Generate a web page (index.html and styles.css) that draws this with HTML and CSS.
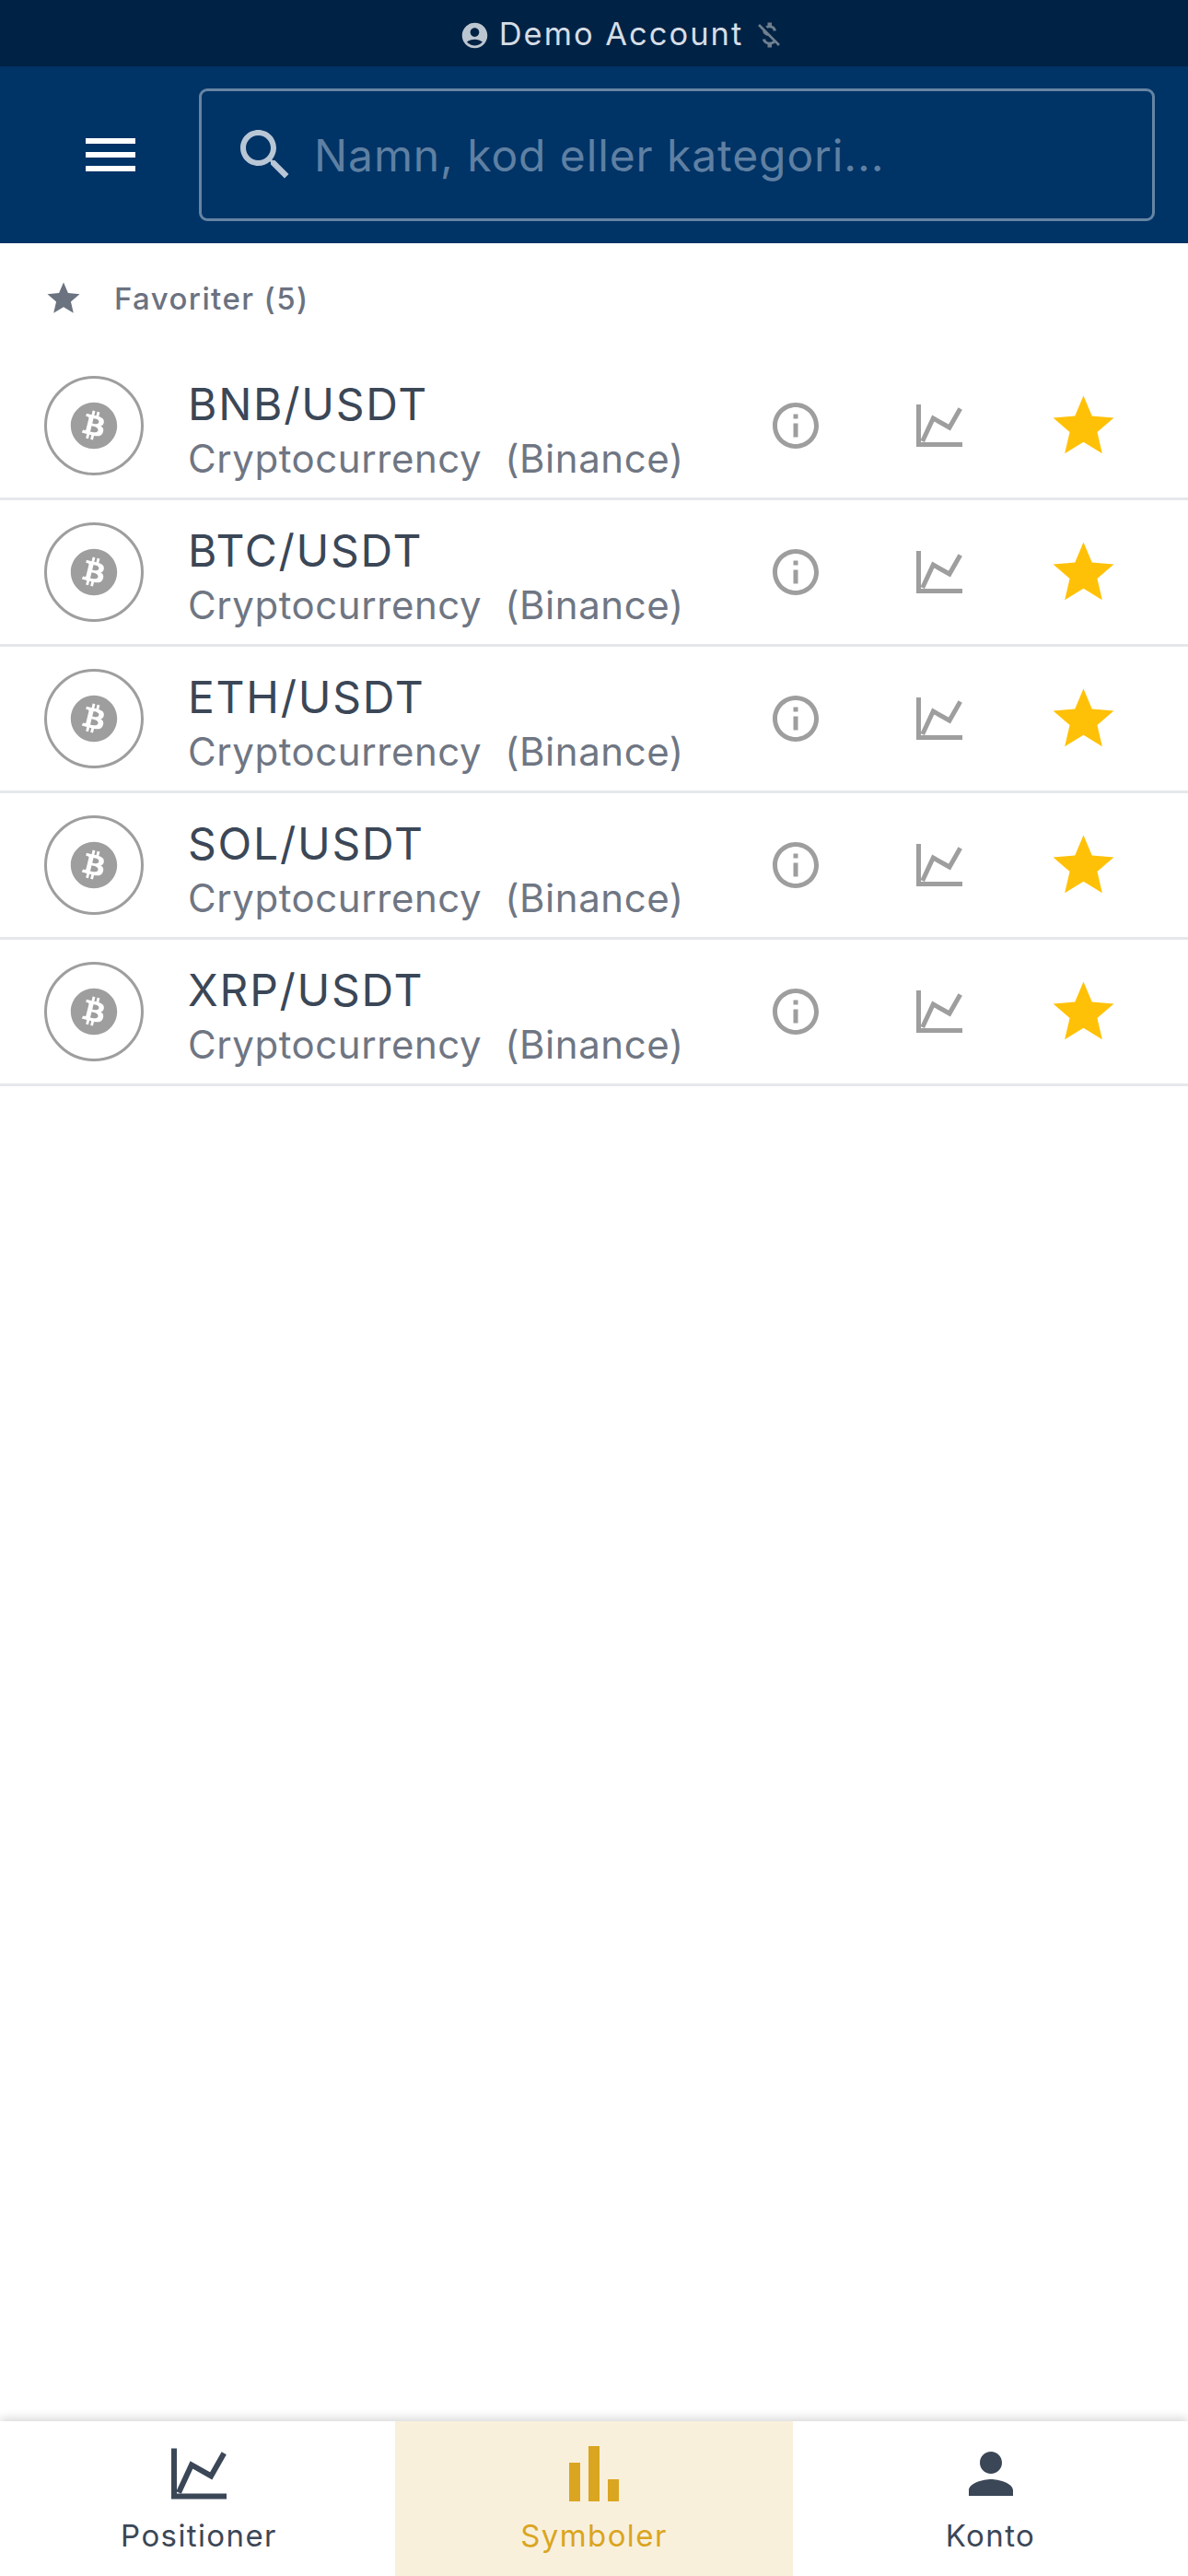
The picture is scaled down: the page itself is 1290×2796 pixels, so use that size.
FILE: index.html
```html
<!DOCTYPE html>
<html lang="en">
<head>
  <meta charset="UTF-8" />
  <title>Symboler</title>
  <link rel="stylesheet" href="styles.css">
</head>
<body>
  <!-- Shared icons -->
  <svg class="sprite" aria-hidden="true">
    <symbol id="i-btc" viewBox="0 0 512 512"><path d="M504 256c0 136.967-111.033 248-248 248S8 392.967 8 256 119.033 8 256 8s248 111.033 248 248zm-141.651-35.33c4.937-32.999-20.191-50.739-54.55-62.573l11.146-44.702-27.213-6.781-10.851 43.524c-7.154-1.783-14.502-3.464-21.803-5.13l10.929-43.81-27.198-6.781-11.153 44.686c-5.922-1.349-11.735-2.682-17.377-4.084l.031-.14-37.53-9.37-7.239 29.062s20.191 4.627 19.765 4.913c11.022 2.751 13.014 10.044 12.68 15.825l-12.696 50.925c.76.194 1.744.473 2.829.907-.907-.225-1.876-.473-2.876-.713l-17.796 71.338c-1.349 3.348-4.767 8.37-12.471 6.464.271.395-19.78-4.937-19.78-4.937l-13.51 31.147 35.414 8.827c6.588 1.651 13.045 3.379 19.4 5.006l-11.262 45.213 27.182 6.781 11.153-44.733a1038.209 1038.209 0 0 0 21.69 5.627l-11.115 44.523 27.213 6.781 11.262-45.128c46.404 8.781 81.299 5.239 95.986-36.727 11.836-33.79-.589-53.281-25.004-65.991 17.78-4.098 31.174-15.792 34.747-39.949zm-62.177 87.179c-8.41 33.79-65.308 15.523-83.755 10.943l14.944-59.899c18.446 4.603 77.6 13.717 68.811 48.956zm8.417-87.667c-7.673 30.736-55.031 15.12-70.393 11.292l13.548-54.327c15.363 3.828 64.836 10.973 56.845 43.035z"/></symbol>
    <symbol id="i-info" viewBox="0 0 24 24"><path d="M11 7h2v2h-2zm0 4h2v6h-2zm1-9C6.48 2 2 6.48 2 12s4.48 10 10 10 10-4.48 10-10S17.52 2 12 2zm0 18c-4.41 0-8-3.59-8-8s3.59-8 8-8 8 3.59 8 8-3.59 8-8 8z"/></symbol>
    <symbol id="i-chart" viewBox="0 0 50 46"><path d="M0 0h5v41h45v5H0z"/><path d="M6.7 40 18.3 15 36 25 47.7 4.5" fill="none" stroke="currentColor" stroke-width="5"/></symbol>
    <symbol id="i-star" viewBox="0 0 24 24"><path d="M12 17.27L18.18 21l-1.64-7.03L22 9.24l-7.19-.61L12 2 9.19 8.63 2 9.24l5.46 4.73L5.82 21z"/></symbol>
  </svg>

  <div class="status-bar">
    <svg class="status-user" viewBox="0 0 24 24"><path d="M12 2C6.48 2 2 6.48 2 12s4.48 10 10 10 10-4.48 10-10S17.52 2 12 2zm0 4c1.93 0 3.5 1.57 3.5 3.5S13.93 13 12 13s-3.5-1.57-3.5-3.5S10.07 6 12 6zm0 14c-2.03 0-4.43-.82-6.14-2.88C7.55 15.8 9.68 15 12 15s4.45.8 6.14 2.12C16.43 19.18 14.03 20 12 20z"/></svg>
    <span class="status-text">Demo Account</span>
    <svg class="status-money" viewBox="0 0 24 24"><path d="M12.5 6.9c1.78 0 2.44.85 2.5 2.1h2.21c-.07-1.72-1.12-3.3-3.21-3.81V3h-3v2.16c-.53.12-1.03.3-1.48.54l1.47 1.47c.41-.17.91-.27 1.51-.27zM5.33 4.06L4.06 5.33 7.5 8.77c0 2.08 1.56 3.21 3.91 3.91l3.51 3.51c-.34.48-1.05.91-2.42.91-2.06 0-2.87-.92-2.98-2.1h-2.2c.12 2.19 1.76 3.42 3.68 3.83V21h3v-2.15c.96-.18 1.82-.55 2.45-1.12l2.22 2.22 1.27-1.27L5.33 4.06z"/></svg>
  </div>

  <header class="top-bar">
    <svg class="menu-icon" viewBox="0 0 24 24"><path d="M3 18h18v-2H3v2zm0-5h18v-2H3v2zm0-7v2h18V6H3z"/></svg>
    <div class="search-box">
      <svg class="search-icon" viewBox="0 0 24 24"><path d="M15.5 14h-.79l-.28-.27C15.41 12.59 16 11.11 16 9.5 16 5.91 13.09 3 9.5 3S3 5.91 3 9.5 5.91 16 9.5 16c1.61 0 3.09-.59 4.23-1.57l.27.28v.79l5 4.99L20.49 19l-4.99-5zm-6 0C7.01 14 5 11.99 5 9.5S7.01 5 9.5 5 14 7.01 14 9.5 11.99 14 9.5 14z"/></svg>
      <span class="search-hint">Namn, kod eller kategori...</span>
    </div>
  </header>

  <main class="content">
    <div class="section-title">
      <svg class="section-star"><use href="#i-star"/></svg>
      <span>Favoriter (5)</span>
    </div>

    <ul class="symbols">
      <li class="symbol">
        <span class="coin"><svg><use href="#i-btc"/></svg></span>
        <div class="symbol-text">
          <div class="symbol-name">BNB/USDT</div>
          <div class="symbol-sub"><span>Cryptocurrency</span><span>(Binance)</span></div>
        </div>
        <span class="action"><svg class="ic-info"><use href="#i-info"/></svg></span>
        <span class="action"><svg class="ic-chart"><use href="#i-chart"/></svg></span>
        <span class="action"><svg class="ic-star"><use href="#i-star"/></svg></span>
      </li>
      <li class="symbol">
        <span class="coin"><svg><use href="#i-btc"/></svg></span>
        <div class="symbol-text">
          <div class="symbol-name">BTC/USDT</div>
          <div class="symbol-sub"><span>Cryptocurrency</span><span>(Binance)</span></div>
        </div>
        <span class="action"><svg class="ic-info"><use href="#i-info"/></svg></span>
        <span class="action"><svg class="ic-chart"><use href="#i-chart"/></svg></span>
        <span class="action"><svg class="ic-star"><use href="#i-star"/></svg></span>
      </li>
      <li class="symbol">
        <span class="coin"><svg><use href="#i-btc"/></svg></span>
        <div class="symbol-text">
          <div class="symbol-name">ETH/USDT</div>
          <div class="symbol-sub"><span>Cryptocurrency</span><span>(Binance)</span></div>
        </div>
        <span class="action"><svg class="ic-info"><use href="#i-info"/></svg></span>
        <span class="action"><svg class="ic-chart"><use href="#i-chart"/></svg></span>
        <span class="action"><svg class="ic-star"><use href="#i-star"/></svg></span>
      </li>
      <li class="symbol">
        <span class="coin"><svg><use href="#i-btc"/></svg></span>
        <div class="symbol-text">
          <div class="symbol-name">SOL/USDT</div>
          <div class="symbol-sub"><span>Cryptocurrency</span><span>(Binance)</span></div>
        </div>
        <span class="action"><svg class="ic-info"><use href="#i-info"/></svg></span>
        <span class="action"><svg class="ic-chart"><use href="#i-chart"/></svg></span>
        <span class="action"><svg class="ic-star"><use href="#i-star"/></svg></span>
      </li>
      <li class="symbol">
        <span class="coin"><svg><use href="#i-btc"/></svg></span>
        <div class="symbol-text">
          <div class="symbol-name">XRP/USDT</div>
          <div class="symbol-sub"><span>Cryptocurrency</span><span>(Binance)</span></div>
        </div>
        <span class="action"><svg class="ic-info"><use href="#i-info"/></svg></span>
        <span class="action"><svg class="ic-chart"><use href="#i-chart"/></svg></span>
        <span class="action"><svg class="ic-star"><use href="#i-star"/></svg></span>
      </li>
    </ul>
  </main>

  <nav class="bottom-nav">
    <div class="nav-item first">
      <svg class="nav-chart"><use href="#i-chart"/></svg>
      <span>Positioner</span>
    </div>
    <div class="nav-item active">
      <svg class="nav-bars" viewBox="0 0 54 60"><path d="M0 18h12v42H0zM21 0h12v60H21zM42 36h12v24H42z"/></svg>
      <span>Symboler</span>
    </div>
    <div class="nav-item">
      <svg class="nav-person" viewBox="4 4 16 16"><path d="M12 12c2.21 0 4-1.79 4-4s-1.79-4-4-4-4 1.79-4 4 1.79 4 4 4zm0 2c-2.67 0-8 1.34-8 4v2h16v-2c0-2.66-5.33-4-8-4z"/></svg>
      <span>Konto</span>
    </div>
  </nav>
</body>
</html>
```

FILE: styles.css
```css
* { box-sizing: border-box; }
body {
  font-family: Inter, "Liberation Sans", sans-serif;
  background: #fff;
  margin: 0;
  height: 2796px;
  display: flex;
  flex-direction: column;
  overflow: hidden;
}
svg { fill: currentColor; display: block; }
.sprite { display: none; }

/* Status strip */
.status-bar {
  height: 72px;
  background: #002244;
  color: #d5dde6;
  display: flex;
  align-items: center;
  justify-content: center;
  padding-left: 62px;
}
.status-user { width: 33px; height: 33px; color: #bcc6d1; margin: 4px 10px 0 0; }
.status-text { font-size: 34.5px; letter-spacing: 2px; }
.status-money { width: 36px; height: 36px; color: #6f7f8f; margin: 4px 0 0 10px; }

/* Header */
.top-bar {
  height: 192px;
  background: #003366;
  display: flex;
  align-items: center;
  padding: 0 36px 0 84px;
}
.menu-icon { width: 72px; height: 72px; color: #fff; margin-right: 60px; flex: none; }
.search-box {
  flex: 1;
  height: 144px;
  border: 3px solid #6685a3;
  border-radius: 9px;
  display: flex;
  align-items: center;
  padding-left: 33px;
}
.search-icon { width: 72px; height: 72px; color: #b8c6d5; flex: none; margin-right: 17px; }
.search-hint { font-size: 48px; letter-spacing: 0.9px; color: #5f80a2; }

/* Favourites */
.content { flex: 1; }
.section-title {
  height: 120px;
  display: flex;
  align-items: center;
  padding-left: 48px;
  font-size: 33px;
  font-weight: 500;
  letter-spacing: 1.4px;
  color: #6b7280;
}
.section-star { width: 42px; height: 42px; margin-right: 34px; }
.symbols { list-style: none; margin: 0; padding: 0; }
.symbol {
  height: 159px;
  border-bottom: 3px solid #e5e7eb;
  display: flex;
  align-items: center;
  padding: 0 36px 0 48px;
}
.coin {
  width: 108px;
  height: 108px;
  border: 3px solid #9e9e9e;
  border-radius: 50%;
  color: #9e9e9e;
  display: flex;
  align-items: center;
  justify-content: center;
  flex: none;
  margin-right: 48px;
}
.coin svg { width: 52px; height: 52px; }
.symbol-text { flex: 1; padding-top: 9px; }
.symbol-name { font-size: 48px; line-height: 58px; letter-spacing: 1.75px; color: #3b4757; }
.symbol-sub {
  display: flex;
  gap: 25px;
  margin-top: 5px;
  font-size: 42px;
  line-height: 50px;
  letter-spacing: 0.55px;
  color: #6f7683;
}
.action {
  width: 156px;
  display: flex;
  justify-content: center;
  color: #9e9e9e;
}
.ic-info { width: 60px; height: 60px; }
.ic-chart { width: 50px; height: 46px; }
.ic-star { width: 79px; height: 79px; color: #ffc107; }

/* Bottom nav */
.bottom-nav {
  height: 168px;
  display: grid;
  grid-template-columns: 429px 432px 429px;
  background: #fff;
  box-shadow: 0 -3px 10px rgba(0, 0, 0, 0.16);
}
.nav-item {
  display: flex;
  flex-direction: column;
  align-items: center;
  color: #3b4757;
  font-size: 33px;
  letter-spacing: 1.4px;
  padding-top: 27px;
}
.nav-item.first { padding-left: 3px; }
.nav-item svg { height: 60px; }
.nav-item span { margin-top: 17px; }
.nav-item.active { background: #f9f0dc; color: #daa520; }
.nav-chart { width: 60px; }
.nav-bars { width: 54px; }
.nav-person { width: 48px; }
```
